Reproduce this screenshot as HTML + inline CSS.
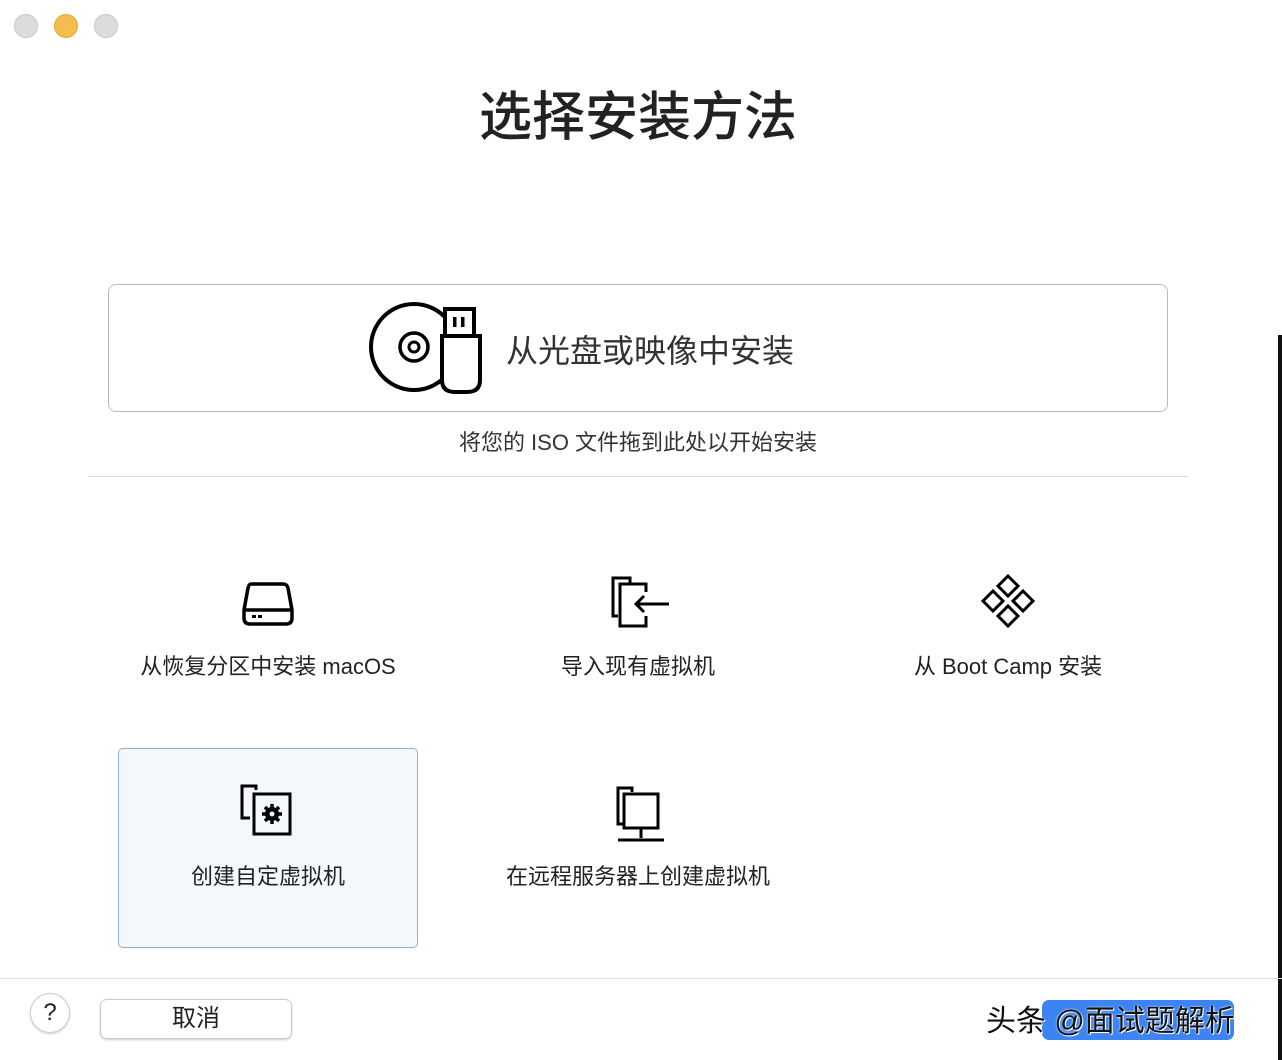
<!DOCTYPE html>
<html><head><meta charset="utf-8"><style>
*{margin:0;padding:0;box-sizing:border-box}
body{width:1282px;height:1060px;background:#fff;position:relative;overflow:hidden;font-family:"Liberation Sans","Noto Sans CJK SC",sans-serif;color:#222}
.dot{position:absolute;top:14px;width:24px;height:24px;border-radius:50%;background:#dcdcdc;border:1px solid #c8c8c8}
.abs{position:absolute}
.lbl{position:absolute;font-size:22px;color:#222;text-align:center;white-space:nowrap}
</style></head><body>
<div class="dot" style="left:14px"></div>
<div class="dot" style="left:54px;background:#f5bd4f;border-color:#e0a83a"></div>
<div class="dot" style="left:94px"></div>
<div class="abs" style="right:0;top:335px;width:4px;height:725px;background:#111"></div>

<div class="abs" style="left:0;width:1276px;top:75px;text-align:center;font-size:53px;font-weight:500;color:#222">选择安装方法</div>

<div class="abs" style="left:108px;top:284px;width:1060px;height:128px;border:1px solid #bbb;border-radius:8px"></div>
<svg class="abs" style="left:366px;top:300px" width="120" height="96" viewBox="0 0 120 96">
<circle cx="48" cy="47" r="43" fill="none" stroke="#000" stroke-width="4"/>
<circle cx="48" cy="47" r="14" fill="none" stroke="#000" stroke-width="3.5"/>
<circle cx="48" cy="47" r="5" fill="none" stroke="#000" stroke-width="3"/>
<rect x="79" y="9" width="29" height="27" fill="#fff" stroke="#000" stroke-width="4"/>
<rect x="87" y="17" width="3.5" height="10" fill="#000"/><rect x="95" y="17" width="3.5" height="10" fill="#000"/>
<path d="M76 36 H114 V80 Q114 92 101 92 H89 Q76 92 76 80 Z" fill="#fff" stroke="#000" stroke-width="4"/>
</svg>
<div class="abs" style="left:506px;top:326px;font-size:32px;color:#333">从光盘或映像中安装</div>
<div class="abs" style="left:0;width:1276px;top:425px;text-align:center;font-size:22px;color:#333">将您的 ISO 文件拖到此处以开始安装</div>
<div class="abs" style="left:88px;top:476px;width:1100px;height:1px;background:#ddd"></div>

<svg class="abs" style="left:240px;top:580px" width="56" height="48" viewBox="0 0 56 48">
<path d="M11 4 H43 Q47 4 48 8 L52 30 V38 Q52 44 46 44 H10 Q4 44 4 38 V30 L8 8 Q9 4 11 4 Z M4 30 H52" fill="none" stroke="#000" stroke-width="3.5"/>
<rect x="12" y="35" width="4" height="3" fill="#000"/><rect x="18" y="35" width="4" height="3" fill="#000"/>
</svg>
<svg class="abs" style="left:608px;top:574px" width="64" height="56" viewBox="0 0 64 56">
<path d="M22 10 V4 H5 V42 H10" fill="none" stroke="#000" stroke-width="3"/>
<path d="M38 18 V10 H12 V52 H38 V42" fill="none" stroke="#000" stroke-width="3"/>
<path d="M61 30 H28 M36 22 L28 30 L36 38" fill="none" stroke="#000" stroke-width="3"/>
</svg>
<svg class="abs" style="left:976px;top:572px" width="64" height="60" viewBox="0 0 64 60">
<g fill="none" stroke="#000" stroke-width="3">
<path d="M32 4 L42 14 L32 24 L22 14 Z"/><path d="M32 34 L42 44 L32 54 L22 44 Z"/>
<path d="M17 19 L27 29 L17 39 L7 29 Z"/><path d="M47 19 L57 29 L47 39 L37 29 Z"/></g>
</svg>
<div class="lbl" style="left:118px;width:300px;top:649px">从恢复分区中安装 macOS</div>
<div class="lbl" style="left:488px;width:300px;top:649px">导入现有虚拟机</div>
<div class="lbl" style="left:858px;width:300px;top:649px">从 Boot Camp 安装</div>

<div class="abs" style="left:118px;top:748px;width:300px;height:200px;border:1px solid #8fb0e0;border-radius:5px;background:#f4f8fd"></div>
<svg class="abs" style="left:238px;top:782px" width="60" height="60" viewBox="0 0 60 60">
<path d="M18 8 V4 H4 V36 H12" fill="none" stroke="#000" stroke-width="3"/>
<rect x="16" y="12" width="36" height="40" fill="none" stroke="#000" stroke-width="3"/>
<circle cx="34" cy="32" r="7" fill="#000"/>
<g stroke="#000" stroke-width="3.5"><path d="M34 22 V42 M24 32 H44 M27 25 L41 39 M41 25 L27 39"/></g>
<circle cx="34" cy="32" r="2.5" fill="#f4f8fd"/>
</svg>
<svg class="abs" style="left:612px;top:784px" width="56" height="60" viewBox="0 0 56 60">
<path d="M20 8 V4 H6 V40 H12" fill="none" stroke="#000" stroke-width="3"/>
<rect x="12" y="10" width="34" height="34" fill="none" stroke="#000" stroke-width="3"/>
<path d="M29 44 V54 M6 56 H52" fill="none" stroke="#000" stroke-width="3"/>
</svg>
<div class="lbl" style="left:118px;width:300px;top:859px">创建自定虚拟机</div>
<div class="lbl" style="left:488px;width:300px;top:859px">在远程服务器上创建虚拟机</div>

<div class="abs" style="left:0;top:978px;width:1282px;height:1px;background:#ddd"></div>
<div class="abs" style="left:30px;top:993px;width:40px;height:40px;border-radius:50%;border:1px solid #ccc;box-shadow:0 1px 2px rgba(0,0,0,.2);text-align:center;font-size:24px;line-height:38px;color:#222">?</div>
<div class="abs" style="left:100px;top:999px;width:192px;height:40px;border:1px solid #ccc;border-radius:7px;box-shadow:0 1px 2px rgba(0,0,0,.2);text-align:center;font-size:24px;line-height:38px;color:#222">取消</div>
<div class="abs" style="left:1042px;top:1000px;width:192px;height:40px;border-radius:7px;background:#3b84f2"></div>
<div class="abs" style="left:986px;top:996px;font-size:30px;color:#111;text-shadow:0 0 2px #fff,1px 1px 0 #fff">头条 @面试题解析</div>
</body></html>
